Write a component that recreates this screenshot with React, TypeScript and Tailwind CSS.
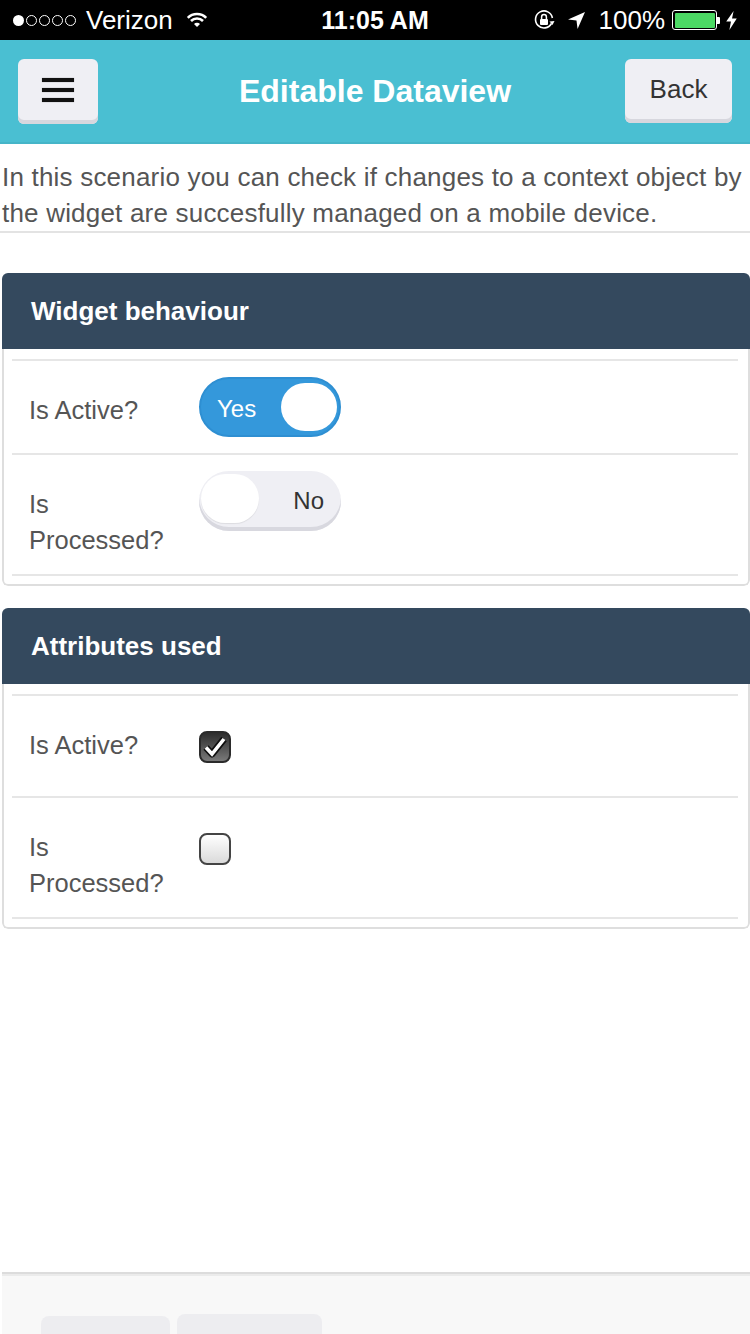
import { useState } from "react";

const StatusBar = () => (
  <div className="h-[40px] bg-black text-white flex items-center px-[13px] text-[26px] leading-none relative">
    <div className="flex items-center gap-[2px]">
      <span className="w-[11px] h-[11px] rounded-full bg-white" />
      <span className="w-[11px] h-[11px] rounded-full border-[1.5px] border-white" />
      <span className="w-[11px] h-[11px] rounded-full border-[1.5px] border-white" />
      <span className="w-[11px] h-[11px] rounded-full border-[1.5px] border-white" />
      <span className="w-[11px] h-[11px] rounded-full border-[1.5px] border-white" />
    </div>
    <span className="ml-[10px]">Verizon</span>
    <svg className="ml-[12px]" width="24" height="18" viewBox="0 0 24 18" fill="none">
      <path d="M2.8 6.8 A13 13 0 0 1 21.2 6.8" stroke="white" strokeWidth="2.6" />
      <path d="M6 10 A8.5 8.5 0 0 1 18 10" stroke="white" strokeWidth="2.6" />
      <path d="M12 16 L9 13 A4.2 4.2 0 0 1 15 13 Z" fill="white" />
    </svg>
    <span className="absolute left-1/2 -translate-x-1/2 font-semibold text-[25px]">11:05 AM</span>
    <div className="ml-auto flex items-center">
      <svg width="22" height="22" viewBox="0 0 22 22" fill="none">
        <path d="M18.5 14.5 A8.5 8.5 0 1 1 19.4 9" stroke="white" strokeWidth="1.6" />
        <path d="M16.5 12.5 L19.5 16 L21.5 12" fill="white" />
        <rect x="7" y="10" width="8" height="6" rx="1" fill="white" />
        <path d="M8.6 10 V8 A2.4 2.4 0 0 1 13.4 8 V10" stroke="white" strokeWidth="1.5" />
      </svg>
      <svg className="ml-[13px]" width="17" height="17" viewBox="0 0 16 16">
        <path d="M16 0 L0 7 L8 8 L9 16 Z" fill="white" />
      </svg>
      <span className="ml-[14px]">100%</span>
      <div className="ml-[7px] flex items-center">
        <div className="w-[45px] h-[20px] rounded-[3px] border-[1.5px] border-white p-[1.5px]">
          <div className="w-full h-full rounded-[1px] bg-[#4cd964]" />
        </div>
        <div className="w-[3px] h-[7px] bg-white rounded-r-[1px]" />
      </div>
      <svg className="ml-[6px]" width="11" height="19" viewBox="0 0 10 18">
        <path d="M7 0 L0 10 L4.5 10 L3 18 L10 7 L5.5 7 L7 0 Z" fill="white" />
      </svg>
    </div>
  </div>
);

const Header = () => (
  <div className="h-[104px] bg-[#4abfd2] border-b-2 border-[#45b5c8] grid grid-cols-[1fr_auto_1fr] items-center px-[18px]">
    <button
      type="button"
      className="justify-self-start w-[80px] h-[65px] rounded-[6px] bg-[#efeff4] shadow-[inset_0_-4px_0_#d7d7de] flex flex-col items-center justify-center gap-[6px] pb-[2px]"
    >
      <span className="w-[32px] h-[4px] bg-[#111] shadow-[0_0_1px_#555]" />
      <span className="w-[32px] h-[4px] bg-[#111] shadow-[0_0_1px_#555]" />
      <span className="w-[32px] h-[4px] bg-[#111] shadow-[0_0_1px_#555]" />
    </button>
    <h1 className="text-white font-bold text-[32px] leading-none">Editable Dataview</h1>
    <button
      type="button"
      className="justify-self-end w-[107px] h-[64px] rounded-[6px] bg-[#efeff4] shadow-[inset_0_-4px_0_#d7d7de] text-[26px] text-[#333] pb-[3px]"
    >
      Back
    </button>
  </div>
);

const Toggle = ({ on }: { on: boolean }) =>
  on ? (
    <div className="relative w-[142px] h-[60px] rounded-full bg-[#3498db] border-2 border-[#2e8fd2] flex items-center">
      <span className="ml-[16px] pt-[3px] text-white text-[24px]">Yes</span>
      <span className="absolute right-[2px] top-[4px] w-[56px] h-[48px] rounded-full bg-white" />
    </div>
  ) : (
    <div className="relative w-[142px] h-[60px] rounded-full bg-[#efeff4] shadow-[inset_0_-4px_0_#d8d8df] flex items-center justify-end pb-[4px]">
      <span className="mr-[17px] pt-[3px] text-[#333] text-[24px]">No</span>
      <span className="absolute left-[2px] top-[3px] w-[58px] h-[49px] rounded-full bg-white shadow-[0_1px_1px_rgba(0,0,0,0.08)]" />
    </div>
  );

const Checkbox = ({ checked }: { checked: boolean }) =>
  checked ? (
    <div className="w-[32px] h-[32px] rounded-[8px] border-2 border-[#2b2b2b] bg-linear-to-b from-[#2e2e2e] to-[#7a7a7a] flex items-center justify-center">
      <svg width="26" height="24" viewBox="0 0 26 24" fill="none">
        <path d="M4 12.5 L10 19 L22 4" stroke="#111" strokeWidth="7" strokeLinejoin="round" />
        <path d="M4 12.5 L10 19 L22 4" stroke="white" strokeWidth="3.6" strokeLinejoin="miter" />
      </svg>
    </div>
  ) : (
    <div className="w-[32px] h-[32px] rounded-[8px] border-2 border-[#444] bg-linear-to-b from-white to-[#dadada]" />
  );

const Row = ({ label, children, tall }: { label: string; children: React.ReactNode; tall?: boolean }) => (
  <div className="flex border-t-2 border-[#e6e6e6] py-[16px]">
    <label className="w-[187px] shrink-0 pl-[17px] pr-[22px] pt-[15px] text-[25.5px] leading-[36px] text-[#555]">
      {label}
    </label>
    <div className={tall ? "h-[68px] pt-[19px]" : ""}>{children}</div>
  </div>
);

const Card = ({ title, children }: { title: string; children: React.ReactNode }) => (
  <section className="rounded-[6px] overflow-hidden">
    <div className="h-[76px] bg-[#34495e] flex items-center px-[29px]">
      <h2 className="text-white font-bold text-[26px]">{title}</h2>
    </div>
    <div className="border-x-2 border-b-2 border-[#dedede] rounded-b-[6px] pl-[8px] pr-[10px] pt-[10px] pb-[8px]">
      {children}
      <div className="border-t-2 border-[#e6e6e6]" />
    </div>
  </section>
);

const App = () => {
  const [active] = useState(true);

  return (
    <div className="w-[750px] h-[1334px] overflow-hidden bg-white flex flex-col font-['Liberation_Sans',Arial,sans-serif]">
      <StatusBar />
      <Header />
      <p className="pl-[2px] pt-[15px] text-[26px] tracking-[0.2px] leading-[36px] text-[#555] border-b-2 border-[#e3e3e3]">
        In this scenario you can check if changes to a context object by the widget are succesfully managed on a
        mobile device.
      </p>
      <main className="pl-[2px] mt-[40px] flex flex-col gap-[22px]">
        <Card title="Widget behaviour">
          <Row label="Is Active?">
            <Toggle on={active} />
          </Row>
          <Row label="Is Processed?">
            <Toggle on={false} />
          </Row>
        </Card>
        <Card title="Attributes used">
          <Row label="Is Active?" tall>
            <Checkbox checked={active} />
          </Row>
          <Row label="Is Processed?" tall>
            <Checkbox checked={false} />
          </Row>
        </Card>
      </main>
      <div className="flex-1" />
      <footer className="h-[62px] border-t-2 border-[#dcdcdc] bg-[#f8f8f8] ml-[2px]">
        <div className="h-[2px] bg-[#ebebeb]" />
        <div className="flex items-end h-[58px] pl-[39px] gap-[7px]">
          <div className="w-[129px] h-[18px] rounded-t-[8px] bg-[#ededf0]" />
          <div className="w-[145px] h-[20px] rounded-t-[8px] bg-[#ededf0]" />
        </div>
      </footer>
    </div>
  );
};

export default App;
